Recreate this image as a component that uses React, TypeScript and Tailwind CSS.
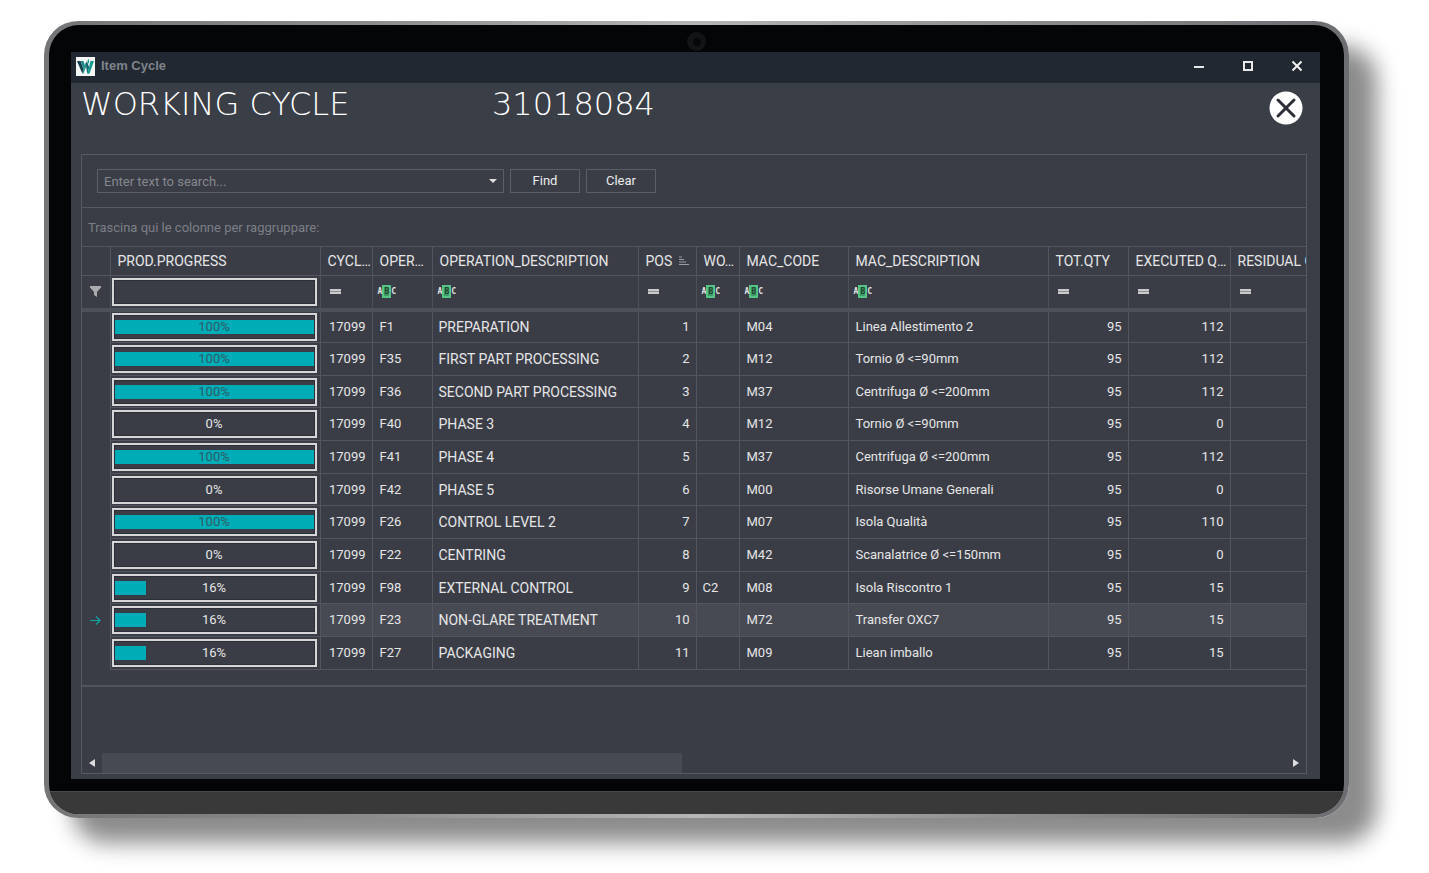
import type { ReactNode } from "react";

type Filter = "progress" | "equals" | "contains";

interface Column {
  key: string;
  title: string;
  col: string;
  filter: Filter;
  sorted?: boolean;
}

const columns: Column[] = [
  { key: "progress", title: "PROD.PROGRESS", col: "w-[210px]", filter: "progress" },
  { key: "cycle", title: "CYCL…", col: "w-[52px]", filter: "equals" },
  { key: "oper", title: "OPER…", col: "w-[60px]", filter: "contains" },
  { key: "description", title: "OPERATION_DESCRIPTION", col: "w-[206px]", filter: "contains" },
  { key: "pos", title: "POS", col: "w-[58px]", filter: "equals", sorted: true },
  { key: "work", title: "WO…", col: "w-[43px]", filter: "contains" },
  { key: "mac", title: "MAC_CODE", col: "w-[109px]", filter: "contains" },
  { key: "machine", title: "MAC_DESCRIPTION", col: "w-[200px]", filter: "contains" },
  { key: "total", title: "TOT.QTY", col: "w-[80px]", filter: "equals" },
  { key: "executed", title: "EXECUTED Q…", col: "w-[102px]", filter: "equals" },
  { key: "residual", title: "RESIDUAL QTY", col: "w-[120px]", filter: "equals" },
];

interface Row {
  progress: number;
  oper: string;
  description: string;
  work?: string;
  mac: string;
  machine: string;
  executed: number;
}

const rows: Row[] = [
  { progress: 100, oper: "F1", description: "PREPARATION", mac: "M04", machine: "Linea Allestimento 2", executed: 112 },
  { progress: 100, oper: "F35", description: "FIRST PART PROCESSING", mac: "M12", machine: "Tornio Ø <=90mm", executed: 112 },
  { progress: 100, oper: "F36", description: "SECOND PART PROCESSING", mac: "M37", machine: "Centrifuga Ø <=200mm", executed: 112 },
  { progress: 0, oper: "F40", description: "PHASE 3", mac: "M12", machine: "Tornio Ø <=90mm", executed: 0 },
  { progress: 100, oper: "F41", description: "PHASE 4", mac: "M37", machine: "Centrifuga Ø <=200mm", executed: 112 },
  { progress: 0, oper: "F42", description: "PHASE 5", mac: "M00", machine: "Risorse Umane Generali", executed: 0 },
  { progress: 100, oper: "F26", description: "CONTROL LEVEL 2", mac: "M07", machine: "Isola Qualità", executed: 110 },
  { progress: 0, oper: "F22", description: "CENTRING", mac: "M42", machine: "Scanalatrice Ø <=150mm", executed: 0 },
  { progress: 16, oper: "F98", description: "EXTERNAL CONTROL", work: "C2", mac: "M08", machine: "Isola Riscontro 1", executed: 15 },
  { progress: 16, oper: "F23", description: "NON-GLARE TREATMENT", mac: "M72", machine: "Transfer OXC7", executed: 15 },
  { progress: 16, oper: "F27", description: "PACKAGING", mac: "M09", machine: "Liean imballo", executed: 15 },
];

const selectedRow = 9;

function AppLogo() {
  return (
    <svg viewBox="0 0 19 19" className="size-[19px]" aria-hidden="true">
      <rect width="19" height="19" fill="#f4f6f6" />
      <path d="M1 4h3.600l3 8.600-1.300 3.900z" fill="#173f4c" />
      <path d="M4.600 4h2.800l1.600 4.600-1.400 4z" fill="#1d8c89" />
      <path d="M9.500 6.500 11 4.200l2.200 6.300L11.400 17z" fill="#14676c" />
      <path d="M9.500 6.500 6.300 16.500h1.200l3-8z" fill="#1b8f8b" />
      <path d="M14.500 4H18l-4.500 12.500-2.100.500z" fill="#129a90" />
      <path d="m11.400 4 1.300-2.200L13.300 5l-1 2z" fill="#1aa79b" />
    </svg>
  );
}

function EqualsIcon() {
  return (
    <svg viewBox="0 0 11 5" className="h-[5px] w-[11px]" role="img" aria-label="Equals">
      <rect width="11" height="5" fill="#8e9094" />
      <rect width="11" height="2" fill="#c9cacc" />
      <rect y="3" width="11" height="2" fill="#c9cacc" />
    </svg>
  );
}

function ContainsIcon() {
  return (
    <span className="flex h-[13px] items-center font-['DejaVu_Sans_Mono',monospace] text-[8px] leading-[13px] font-bold text-[#e4e4e4]">
      <span>A</span>
      <span className="flex h-[13px] w-[9px] items-center justify-center border-2 border-[#54c584] bg-[#3f9a68] text-[#24442f]">B</span>
      <span>C</span>
    </span>
  );
}

function ProgressBox({ value, children }: { value?: number; children?: ReactNode }) {
  return (
    <div className="relative flex h-[28px] items-center justify-center border-2 border-[#d6d6d8] bg-[#3a3d46] shadow-[inset_0_0_0_1px_#2b2e36]">
      {value !== undefined && (
        <span className="absolute inset-x-px inset-y-[5px]">
          <span className="block h-full bg-[#00adb7]" style={{ width: `${value}%` }} />
        </span>
      )}
      {children}
    </div>
  );
}

function HeaderCell({ column }: { column: Column }) {
  return (
    <th scope="col" className="border border-[#52565e] pl-[7px] font-normal">
      <span className="flex items-center justify-between pr-[7px] whitespace-nowrap">
        <span>{column.title}</span>
        {column.sorted && (
          <svg viewBox="0 0 10 10" className="size-[10px] shrink-0" role="img" aria-label="Sorted ascending">
            <path d="M0 1h3M0 3.500h5M0 6h7M0 8.500h10" stroke="#9a9ca1" strokeWidth="1.200" />
          </svg>
        )}
      </span>
    </th>
  );
}

function CycleTable() {
  return (
    <table className="w-[1268px] table-fixed border-collapse text-left text-[14px] leading-[20px] text-[#e6e6e6]">
      <colgroup>
        <col className="w-[28px]" />
        {columns.map((c) => (
          <col key={c.key} className={c.col} />
        ))}
      </colgroup>
      <thead>
        <tr className="h-[29px]">
          <td className="border border-l-0 border-[#52565e]" />
          {columns.map((c) => (
            <HeaderCell key={c.key} column={c} />
          ))}
        </tr>
        <tr className="h-[34px]">
          <td className="border border-b-4 border-l-0 border-[#4d5159]">
            <svg viewBox="0 0 11 11" className="mx-auto h-[11px] w-[11px]" role="img" aria-label="Filter row">
              <path d="M0 0h11v1.500L7 6v5L4 9V6L0 1.500z" fill="#a9abaf" />
            </svg>
          </td>
          {columns.map((c) => (
            <td key={c.key} className={c.filter === "progress" ? "border border-b-4 border-[#4d5159] pr-[3px] pl-px" : "border border-b-4 border-[#4d5159] px-[5px]"}>
              {c.filter === "progress" && <ProgressBox />}
              {c.filter === "equals" && <span className="block pl-1"><EqualsIcon /></span>}
              {c.filter === "contains" && <ContainsIcon />}
            </td>
          ))}
        </tr>
      </thead>
      <tbody>
        {rows.map((r, i) => (
          <tr key={r.oper} className={i === selectedRow ? "h-[33px] bg-[#474a53]" : "h-[33px] nth-[3n]:h-[32px]"}>
            <td className="border-r border-[#52565e] bg-[#3a3d46]">
              {i === selectedRow && (
                <svg viewBox="0 0 11 9" className="mx-auto h-[9px] w-[11px]" fill="none" stroke="#12a5a5" strokeWidth="1.200" role="img" aria-label="Current row">
                  <path d="M0 4.500h10M6 .500l4 4-4 4" />
                </svg>
              )}
            </td>
            <td className="border border-[#52565e] bg-[#3a3d46] pr-[3px] pl-px">
              <ProgressBox value={r.progress}>
                <span className={r.progress === 100 ? "relative text-[13px] text-[#2f5a63]" : "relative text-[13px]"}>{r.progress}%</span>
              </ProgressBox>
            </td>
            <td className="border border-[#52565e] px-[6px] text-right text-[13px]">17099</td>
            <td className="border border-[#52565e] px-[7px] text-[13px]">{r.oper}</td>
            <td className="border border-[#52565e] px-[6px]">{r.description}</td>
            <td className="border border-[#52565e] px-[6px] text-right text-[13px]">{i + 1}</td>
            <td className="border border-[#52565e] px-[6px] text-[13px]">{r.work}</td>
            <td className="border border-[#52565e] px-[7px] text-[13px]">{r.mac}</td>
            <td className="border border-[#52565e] px-[7px] text-[13px]">{r.machine}</td>
            <td className="border border-[#52565e] px-[6px] text-right text-[13px]">95</td>
            <td className="border border-[#52565e] px-[6px] text-right text-[13px]">{r.executed}</td>
            <td className="border border-[#52565e] px-[6px]" />
          </tr>
        ))}
      </tbody>
    </table>
  );
}

function TitleBar() {
  return (
    <header className="flex h-[31px] items-center justify-between bg-[#222831] pr-[17px] pb-[3px] pl-[5px]">
      <div className="flex items-center gap-[6px]">
        <AppLogo />
        <span className="font-['Liberation_Sans',sans-serif] text-[13px] leading-[16px] font-bold text-[#7f838a]">Item Cycle</span>
      </div>
      <div className="flex gap-[37px]">
        <button type="button" aria-label="Minimize">
          <svg viewBox="0 0 12 12" className="size-[12px]" stroke="#e8e8e8" strokeWidth="2">
            <path d="M1 7h10" />
          </svg>
        </button>
        <button type="button" aria-label="Maximize">
          <svg viewBox="0 0 12 12" className="size-[12px]" fill="none" stroke="#e8e8e8" strokeWidth="2">
            <path d="M2 2h8v8H2z" />
          </svg>
        </button>
        <button type="button" aria-label="Close window">
          <svg viewBox="0 0 12 12" className="size-[12px]" stroke="#f2f2f2" strokeWidth="2">
            <path d="m1.500 1.500 9 9M10.500 1.500l-9 9" />
          </svg>
        </button>
      </div>
    </header>
  );
}

export default function App() {
  return (
    <main className="min-h-screen bg-white pt-[21px] pr-[80px] pb-[55px] pl-[44px] font-[Roboto,sans-serif]">
      <div className="rounded-[34px] bg-[linear-gradient(90deg,#747577,#8b8c8e_25%,#b4b5b5_50%,#8b8c8e_75%,#6c6d70)] px-[5px] py-[4px] shadow-[28px_25px_22px_0_#8c8c8c]">
        <div className="overflow-hidden rounded-[30px] bg-[#040507]">
          <div className="flex h-[27px] items-end justify-center pb-[1px]">
            <span className="flex size-[19px] items-center justify-center rounded-full bg-[#131415]">
              <span className="size-[8px] rounded-full bg-[#060708]" />
            </span>
          </div>
          <div className="mr-[24px] mb-[12px] ml-[22px] bg-[#3a3e47]">
            <TitleBar />
            <div className="flex h-[71px] items-start justify-between pr-[17px] pl-[10px]">
              <h1 className="flex pt-[4px] font-['DejaVu_Sans',sans-serif] text-[32px] leading-[34px] font-extralight text-white">
                <span className="w-[411px]">WORKING CYCLE</span>
                <span>31018084</span>
              </h1>
              <button type="button" aria-label="Close" className="mt-[8px]">
                <svg viewBox="0 0 34 34" className="size-[34px]">
                  <circle cx="17" cy="17" r="16.500" fill="#fff" />
                  <path d="m9 9 16 16M25 9 9 25" stroke="#2b2e36" strokeWidth="3" strokeLinecap="round" />
                </svg>
              </button>
            </div>
            <div className="px-[10px] pb-[5px]">
              <section className="mr-[3px] overflow-hidden border border-[#555961] bg-[#3a3d46]">
                <form className="flex h-[53px] items-center gap-[6px] border-b border-[#555961] px-[15px] text-[13px]">
                  <div className="flex h-[24px] w-[407px] items-center border border-[#5a5e66] pr-[6px]">
                    <input
                      type="text"
                      aria-label="Search"
                      placeholder="Enter text to search..."
                      className="h-full min-w-0 flex-1 bg-transparent px-[6px] text-[#e6e6e6] outline-none placeholder:text-[#85888f]"
                    />
                    <button type="button" aria-label="Search history">
                      <svg viewBox="0 0 8 4" className="h-[4px] w-[8px]">
                        <path d="M0 0h8L4 4z" fill="#e0e0e0" />
                      </svg>
                    </button>
                  </div>
                  <button type="button" className="h-[24px] w-[70px] border border-[#5a5e66] text-[#ececec]">Find</button>
                  <button type="button" className="h-[24px] w-[70px] border border-[#5a5e66] text-[#ececec]">Clear</button>
                </form>
                <p className="flex h-[38px] items-center px-[6px] pt-px text-[13px] text-[#7c7f86]">Trascina qui le colonne per raggruppare:</p>
                <CycleTable />
                <div className="mt-[15px] border-t-2 border-[#50545c] pt-[66px]">
                  <div className="flex h-[20px] items-center">
                    <button type="button" aria-label="Scroll left" className="flex h-full w-[20px] items-center justify-center">
                      <svg viewBox="0 0 6 8" className="h-[8px] w-[6px]">
                        <path d="M6 0v8L0 4z" fill="#dcdcdc" />
                      </svg>
                    </button>
                    <div className="h-full flex-1">
                      <div className="h-full w-[49%] bg-[#474a53]" />
                    </div>
                    <button type="button" aria-label="Scroll right" className="flex h-full w-[20px] items-center justify-center">
                      <svg viewBox="0 0 6 8" className="h-[8px] w-[6px]">
                        <path d="M0 0v8l6-4z" fill="#dcdcdc" />
                      </svg>
                    </button>
                  </div>
                </div>
              </section>
            </div>
          </div>
          <div className="h-[23px] border-t border-[#4a4a4a] bg-[#393939]" />
        </div>
      </div>
    </main>
  );
}
